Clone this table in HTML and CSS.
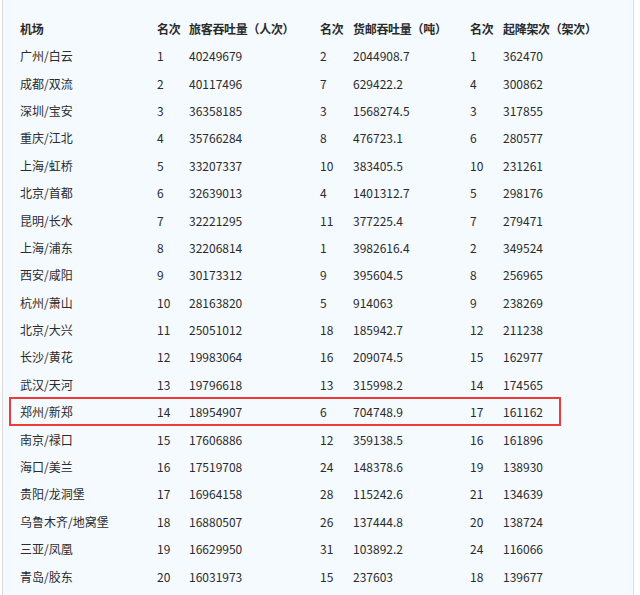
FILE: index.html
```html
<!DOCTYPE html>
<html lang="zh">
<head>
<meta charset="utf-8">
<link rel="stylesheet" href="styles.css">
</head>
<body>
<div class="frame">
  <div class="table">
    <div class="row head"><span>机场</span><span>名次</span><span>旅客吞吐量（人次）</span><span>名次</span><span>货邮吞吐量（吨）</span><span>名次</span><span>起降架次（架次）</span></div>
    <div class="row"><span>广州/白云</span><span>1</span><span>40249679</span><span>2</span><span>2044908.7</span><span>1</span><span>362470</span></div>
    <div class="row"><span>成都/双流</span><span>2</span><span>40117496</span><span>7</span><span>629422.2</span><span>4</span><span>300862</span></div>
    <div class="row"><span>深圳/宝安</span><span>3</span><span>36358185</span><span>3</span><span>1568274.5</span><span>3</span><span>317855</span></div>
    <div class="row"><span>重庆/江北</span><span>4</span><span>35766284</span><span>8</span><span>476723.1</span><span>6</span><span>280577</span></div>
    <div class="row"><span>上海/虹桥</span><span>5</span><span>33207337</span><span>10</span><span>383405.5</span><span>10</span><span>231261</span></div>
    <div class="row"><span>北京/首都</span><span>6</span><span>32639013</span><span>4</span><span>1401312.7</span><span>5</span><span>298176</span></div>
    <div class="row"><span>昆明/长水</span><span>7</span><span>32221295</span><span>11</span><span>377225.4</span><span>7</span><span>279471</span></div>
    <div class="row"><span>上海/浦东</span><span>8</span><span>32206814</span><span>1</span><span>3982616.4</span><span>2</span><span>349524</span></div>
    <div class="row"><span>西安/咸阳</span><span>9</span><span>30173312</span><span>9</span><span>395604.5</span><span>8</span><span>256965</span></div>
    <div class="row"><span>杭州/萧山</span><span>10</span><span>28163820</span><span>5</span><span>914063</span><span>9</span><span>238269</span></div>
    <div class="row"><span>北京/大兴</span><span>11</span><span>25051012</span><span>18</span><span>185942.7</span><span>12</span><span>211238</span></div>
    <div class="row"><span>长沙/黄花</span><span>12</span><span>19983064</span><span>16</span><span>209074.5</span><span>15</span><span>162977</span></div>
    <div class="row"><span>武汉/天河</span><span>13</span><span>19796618</span><span>13</span><span>315998.2</span><span>14</span><span>174565</span></div>
    <div class="row mark"><span>郑州/新郑</span><span>14</span><span>18954907</span><span>6</span><span>704748.9</span><span>17</span><span>161162</span></div>
    <div class="row"><span>南京/禄口</span><span>15</span><span>17606886</span><span>12</span><span>359138.5</span><span>16</span><span>161896</span></div>
    <div class="row"><span>海口/美兰</span><span>16</span><span>17519708</span><span>24</span><span>148378.6</span><span>19</span><span>138930</span></div>
    <div class="row"><span>贵阳/龙洞堡</span><span>17</span><span>16964158</span><span>28</span><span>115242.6</span><span>21</span><span>134639</span></div>
    <div class="row"><span>乌鲁木齐/地窝堡</span><span>18</span><span>16880507</span><span>26</span><span>137444.8</span><span>20</span><span>138724</span></div>
    <div class="row"><span>三亚/凤凰</span><span>19</span><span>16629950</span><span>31</span><span>103892.2</span><span>24</span><span>116066</span></div>
    <div class="row"><span>青岛/胶东</span><span>20</span><span>16031973</span><span>15</span><span>237603</span><span>18</span><span>139677</span></div>
  </div>
</div>
</body>
</html>
```

FILE: styles.css
```css
html, body {
  margin: 0;
  padding: 0;
  background: #ffffff;
}
.frame {
  margin-left: 2px;
  width: 632px;
  height: 595px;
  border-left: 1px solid #dcdcdc;
  border-right: 1px solid #dcdcdc;
  background: #f5faff;
  box-sizing: border-box;
  padding: 14.6px 0 0 7px;
  font-family: "Noto Sans CJK SC", "Noto Sans", sans-serif;
  font-size: 12px;
  color: #2b2b2b;
}
.table {
  width: 550px;
}
.row {
  display: grid;
  grid-template-columns: 137px 32px 131px 33px 117px 33px 1fr;
  align-items: center;
  height: 27.4px;
  padding-left: 10px;
  white-space: nowrap;
}
.head {
  font-weight: bold;
  letter-spacing: -0.3px;
}
.mark {
  outline: 2px solid #f03a3a;
  outline-offset: -1px;
}
```
